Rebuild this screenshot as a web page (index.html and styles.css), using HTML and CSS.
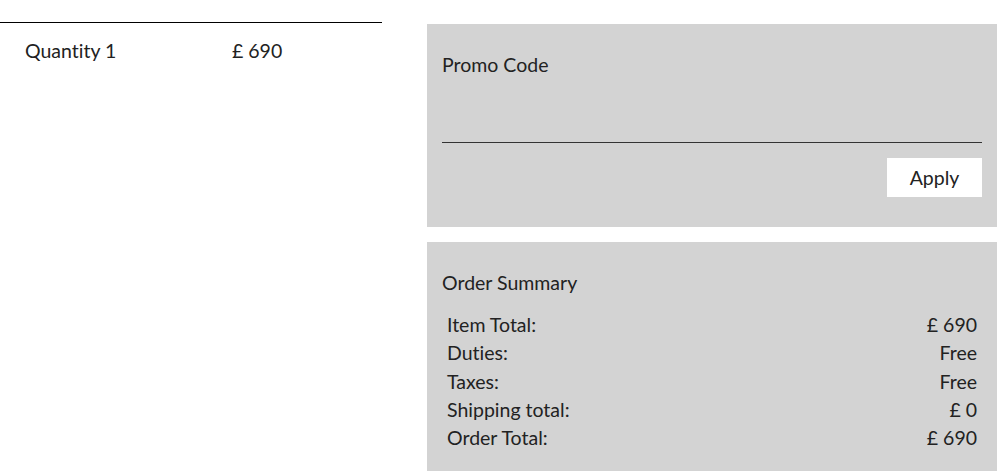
FILE: index.html
```html
<!DOCTYPE html>
<html>
  <head>
    <meta name="viewport" content="width=device-width, initial-scale=1">
    <link rel="stylesheet" href="styles.css">
  </head>
  <body>
    <div class="page">
      <div class="cart-col">
        <div class="item-row">
          <span class="item-qty">Quantity 1</span>
          <span class="item-price">£ 690</span>
        </div>
      </div>

      <div class="side-col">
        <div class="panel promo">
          <label class="panel-title" for="promo">Promo Code</label>
          <input type="text" id="promo" class="promo-input">
          <div class="promo-actions">
            <button class="apply-btn">Apply</button>
          </div>
        </div>

        <div class="panel summary">
          <div class="panel-title">Order Summary</div>
          <div class="summary-rows">
            <div class="summary-row"><span>Item Total:</span><span>£ 690</span></div>
            <div class="summary-row"><span>Duties:</span><span>Free</span></div>
            <div class="summary-row"><span>Taxes:</span><span>Free</span></div>
            <div class="summary-row"><span>Shipping total:</span><span>£ 0</span></div>
            <div class="summary-row"><span>Order Total:</span><span>£ 690</span></div>
          </div>
        </div>
      </div>
    </div>
  </body>
</html>
```

FILE: styles.css
```css
body {
  margin: 0;
  font-family: Lato, "Liberation Sans", sans-serif;
  font-size: 19.5px;
  font-variant-ligatures: none;
  color: #222;
  background: #fff;
}
.page {
  display: flex;
  align-items: flex-start;
}
.cart-col {
  width: 382px;
  margin-top: 22px;
  border-top: 1px solid #000;
}
.item-row {
  display: flex;
  padding: 17px 0 0 25px;
  line-height: 22px;
}
.item-qty {
  width: 207px;
}
.side-col {
  width: 570px;
  margin-left: 45px;
  margin-top: 24px;
  display: flex;
  flex-direction: column;
  gap: 15px;
}
.panel {
  background: #d3d3d3;
  padding: 30px 15px;
}
.panel-title {
  display: block;
  line-height: 22px;
}
.promo-input {
  display: block;
  box-sizing: border-box;
  width: 100%;
  height: 67px;
  margin: 0;
  padding: 0;
  border: none;
  border-bottom: 1px solid #333;
  background: transparent;
  font: inherit;
  outline: none;
}
.promo-actions {
  display: flex;
  justify-content: flex-end;
  margin-top: 15px;
}
.apply-btn {
  width: 95px;
  height: 39px;
  border: none;
  background: #fff;
  font-family: inherit;
  font-size: 19.5px;
  font-variant-ligatures: none;
  color: #222;
  padding: 0;
}
.summary {
  padding-bottom: 40px;
}
.summary-rows {
  margin-top: 17px;
}
.summary-row {
  display: flex;
  justify-content: space-between;
  padding: 0 5px;
  line-height: 28.3px;
}
```
